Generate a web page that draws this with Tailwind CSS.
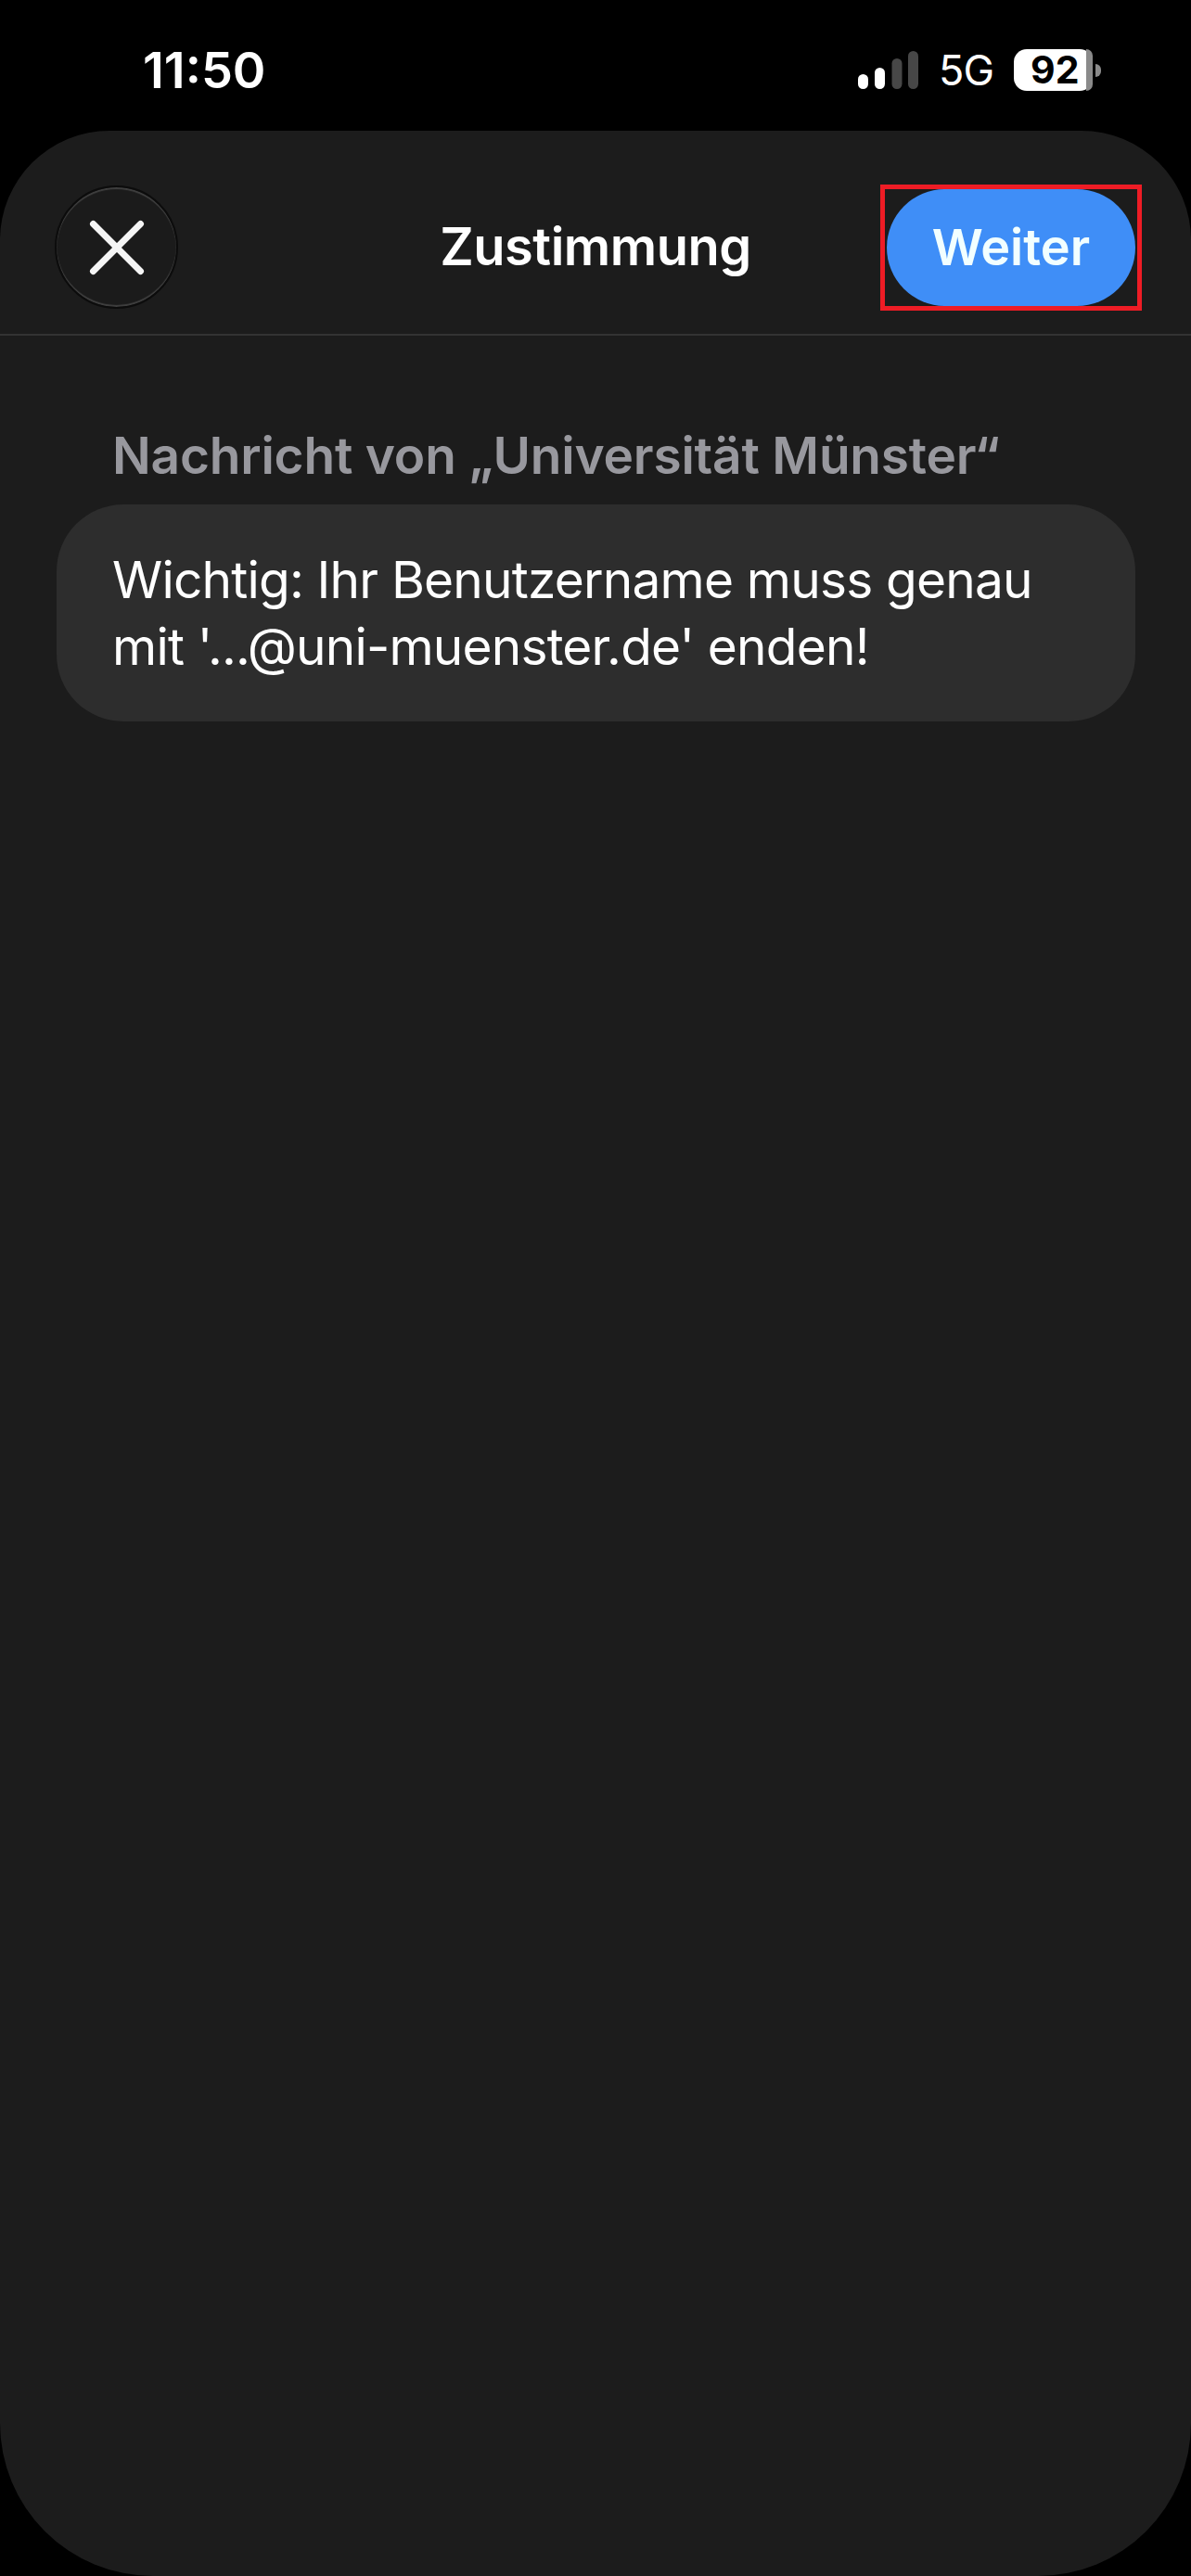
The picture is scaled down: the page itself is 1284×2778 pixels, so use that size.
<!DOCTYPE html>
<html lang="de">
<head>
<meta charset="utf-8">
<title>Zustimmung</title>
<script src="https://cdn.jsdelivr.net/npm/@tailwindcss/browser@4"></script>
</head>
<body class="bg-black">
<div class="flex h-[2778px] w-[1284px] flex-col overflow-hidden bg-black font-['Inter',sans-serif] text-white">
  <!-- status bar -->
  <div class="flex h-[141px] shrink-0 items-start justify-between pl-[154px] pr-[97px] pt-[44px]">
    <span class="text-[54px] font-semibold leading-[63px]">11:50</span>
    <div class="flex items-center pt-[9px]">
      <svg class="block" width="65" height="41" viewBox="0 0 65 41">
        <rect x="0" y="25" width="11" height="16" rx="5.5" fill="#fff"/>
        <rect x="18" y="18" width="11" height="23" rx="5.5" fill="#fff"/>
        <rect x="36.500" y="8" width="11" height="33" rx="5.500" fill="#474747"/>
        <rect x="54" y="0" width="11" height="41" rx="5.500" fill="#474747"/>
      </svg>
      <span class="ml-[22px] text-[45px] font-normal leading-[41px] tracking-[-1px]">5G</span>
      <div class="relative ml-[22px] flex h-[45px] w-[85px] items-center rounded-[14px] bg-white pl-[18px]">
        <span class="text-[41px] font-bold leading-[45px] text-black">92</span>
        <div class="absolute right-0 top-0 h-full w-[7px] rounded-r-[14px] bg-[#8a8a8a]"></div>
      </div>
      <div class="ml-[3px] h-[14px] w-[6px] rounded-r-full bg-[#8a8a8a]"></div>
    </div>
  </div>
  <!-- sheet -->
  <div class="flex-1 rounded-t-[118px] rounded-b-[165px] bg-[#1c1c1c]">
    <div class="relative flex h-[221px] items-center justify-center border-b-2 border-[#333333] pt-[30px]">
      <div class="absolute left-[59px] top-[59px] flex h-[133px] w-[133px] items-center justify-center rounded-full border-2 border-[#0c0c0c] bg-[#1b1b1b] shadow-[inset_0_2px_1px_#404040,inset_0_-2px_1px_#404040]">
        <svg width="64" height="62" viewBox="0 0 64 62" fill="none">
          <path d="M6.500 5.500 L57.500 56.500 M57.500 5.500 L6.500 56.500" stroke="#f5f5f5" stroke-width="7" stroke-linecap="round"/>
        </svg>
      </div>
      <h1 class="text-[56px] font-semibold leading-[68px] tracking-[-0.5px]">Zustimmung</h1>
      <div class="absolute left-[949px] top-[58px] h-[136px] w-[282px] border-[5px] border-[#ee1c25]">
        <div class="ml-[2px] flex h-[126px] w-[268px] items-center justify-center rounded-full bg-[#3f8ef7] text-[54px] font-semibold leading-[68px] text-[#f2ffff]">Weiter</div>
      </div>
    </div>
    <div class="px-[61px] pt-[98px]">
      <div class="pl-[60px] text-[55px] font-semibold leading-[63px] tracking-[-0.2px] text-[#98989e]">Nachricht von „Universität Münster“</div>
      <div class="mt-[21px] h-[234px] w-[1163px] rounded-[72px] bg-[#2d2d2d] px-[60px] pt-[45px] text-[55px] font-normal leading-[72px] tracking-[-0.8px]">Wichtig: Ihr Benutzername muss genau<br>mit '...@uni-muenster.de' enden!</div>
    </div>
  </div>
</div>
</body>
</html>
